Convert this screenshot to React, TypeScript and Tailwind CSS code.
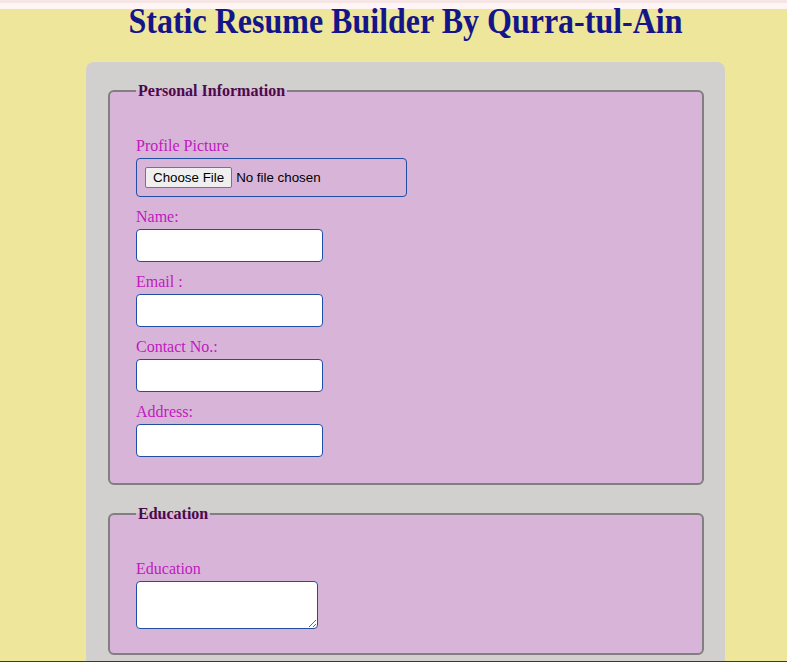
import React from "react";

const labelCls = "block text-[16px] leading-[18px] text-[#bf1abf] pt-[1px] mb-[3px]";
const inputCls = "block w-[187px] h-[33px] bg-white border border-[#1f4ea3] rounded-[4px] mb-[10px]";

export default function App() {
  return (
    <div className="min-h-screen bg-[#eee69b] font-['Liberation_Serif',serif] relative">
      <div className="h-[3px] bg-[#f7e6e6]" />
      <div className="h-[6px] bg-[#fff5f5]" />
      <div className="ml-[86px] w-[639px]">
        <h1 className="text-center text-[32px] leading-[26px] font-bold text-[#15158a] whitespace-nowrap scale-y-[1.14] origin-[50%_24px]">
          Static Resume Builder By Qurra-tul-Ain
        </h1>
        <div className="mt-[27px] bg-[#d1d0ce] rounded-lg pt-[20px] pl-[22px] pr-[21px] pb-[30px]">
          <fieldset className="border-2 border-[#808080] rounded-[6px] bg-[#d8b4d8] pl-[26px] pr-[26px] pt-[36px] pb-[26px]">
            <legend className="px-[2px] text-[16px] leading-[18px] font-bold text-[#4a0a4a]">Personal Information</legend>
            <label className={labelCls}>Profile Picture</label>
            <input
              type="file"
              className="block w-[271px] h-[39px] p-2 border border-[#1f4ea3] rounded-[4px] mb-[10px] font-['Liberation_Sans',Arial,sans-serif] text-[13.33px] text-black file:border file:border-[#767676] file:bg-[#efefef] file:rounded-[2px] file:px-[7px] file:h-[21px] file:mr-[4px] file:text-black"
            />
            <label className={labelCls}>Name:</label>
            <input type="text" className={inputCls} />
            <label className={labelCls}>Email :</label>
            <input type="text" className={inputCls} />
            <label className={labelCls}>Contact No.:</label>
            <input type="text" className={inputCls} />
            <label className={labelCls}>Address:</label>
            <input type="text" className="block w-[187px] h-[33px] bg-white border border-[#1f4ea3] rounded-[4px]" />
          </fieldset>
          <fieldset className="mt-[20px] border-2 border-[#808080] rounded-[6px] bg-[#d8b4d8] pl-[26px] pr-[26px] pt-[36px] pb-[24px]">
            <legend className="px-[2px] text-[16px] leading-[18px] font-bold text-[#4a0a4a]">Education</legend>
            <label className={labelCls}>Education</label>
            <textarea className="block w-[182px] h-[48px] bg-white border border-[#1f4ea3] rounded-[4px]" />
          </fieldset>
        </div>
      </div>
      <div className="fixed left-0 right-0 bottom-0 h-px bg-[#1f3f5f]" />
    </div>
  );
}
